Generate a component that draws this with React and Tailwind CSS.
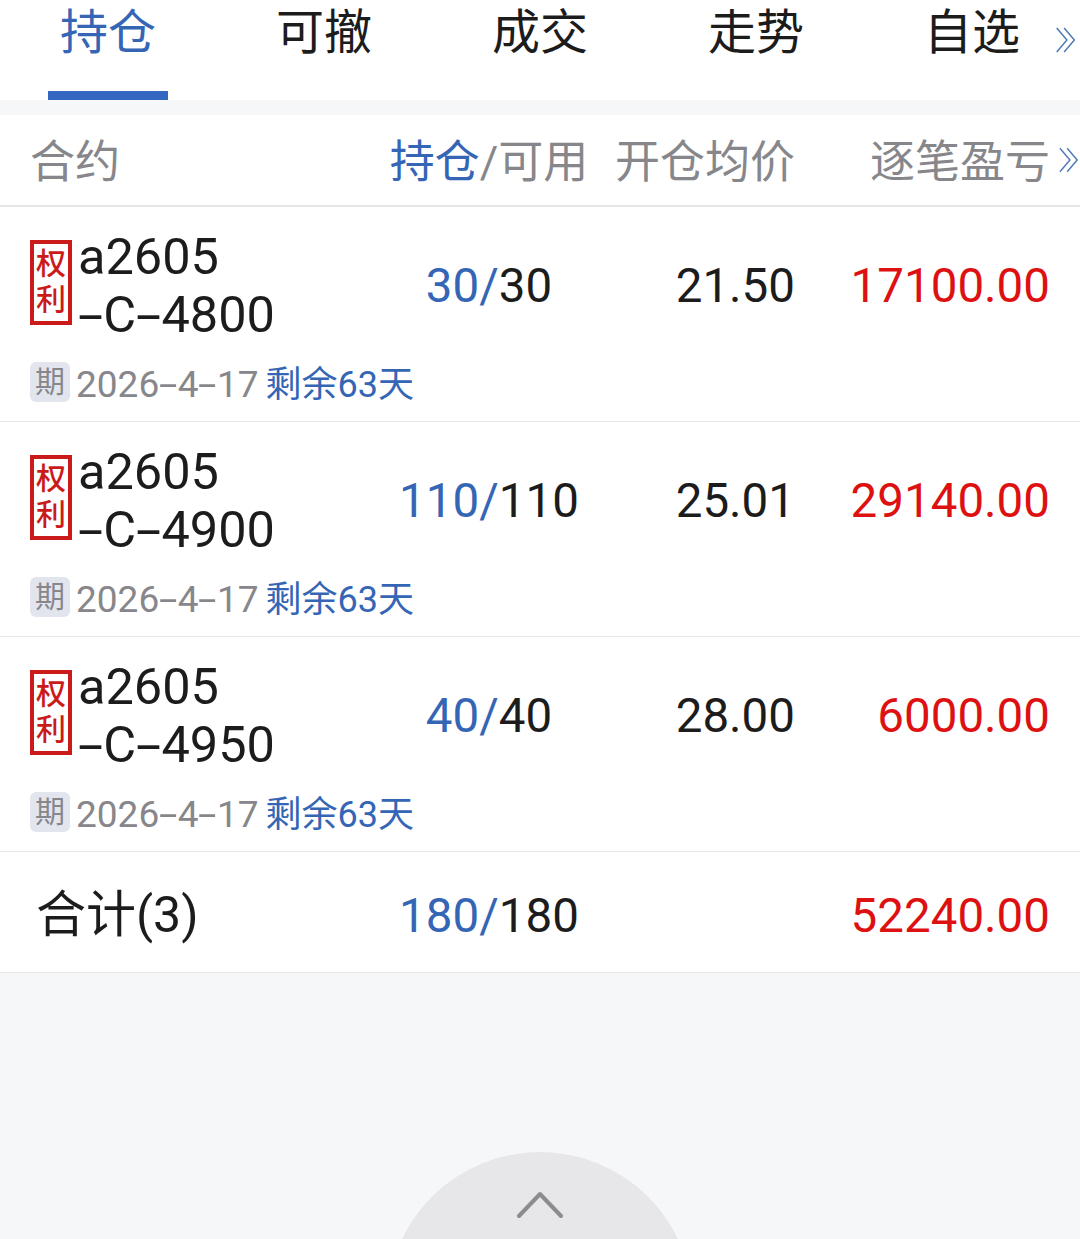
const tabs = [
  { label: '持仓', className: 'w-[120px] ml-[48px] text-[#3565b5]' },
  { label: '可撤', className: 'w-[96px] ml-[108px] text-[#1c1c1c]' },
  { label: '成交', className: 'w-[96px] ml-[120px] text-[#1c1c1c]' },
  { label: '走势', className: 'w-[96px] ml-[120px] text-[#1c1c1c]' },
  { label: '自选', className: 'w-[96px] ml-[120px] text-[#1c1c1c]' },
];

const rows = [
  { strike: '4800', hold: '30', avg: '21.50', profit: '17100.00' },
  { strike: '4900', hold: '110', avg: '25.01', profit: '29140.00' },
  { strike: '4950', hold: '40', avg: '28.00', profit: '6000.00' },
];

const columns = 'grid grid-cols-[370px_238px_187px_255px] items-center';

function DoubleArrow({ className }) {
  return (
    <svg viewBox="0 0 22 28" fill="none" stroke="#4f79b5" strokeWidth="1.6" className={className}>
      <path d="M1 1l11 13L1 27" />
      <path d="M9 1l11 13L9 27" />
    </svg>
  );
}

// the screenshot's font has a much wider hyphen than Roboto
function Dash() {
  return <span className="inline-block w-[0.5em] scale-x-[1.8] text-center">-</span>;
}

function App() {
  return (
    <div className="relative h-[1239px] w-[1080px] overflow-hidden bg-[#f6f7f9] font-['Roboto','Noto_Sans_CJK_SC',sans-serif]">
      <div className="relative flex h-[100px] bg-white">
        {tabs.map((tab, i) => (
          <div key={tab.label} className={`h-full text-center text-[48px] leading-[66px] ${tab.className} ${i === 0 ? 'border-b-[9px] border-[#3367c1]' : ''}`}>
            {tab.label}
          </div>
        ))}
        <DoubleArrow className="absolute left-[1055px] top-[27px] h-[26px] w-[22px]" />
      </div>

      <div className="mt-[15px] bg-white">
        <div className={`relative h-[92px] border-b-2 border-[#e3e5e6] pt-[6px] text-[45px] text-[#87878b] ${columns}`}>
          <div className="pl-[30px]">合约</div>
          <div className="whitespace-nowrap text-center">
            <span className="text-[#3565b5]">持仓</span>/可用
          </div>
          <div className="whitespace-nowrap text-right">开仓均价</div>
          <div className="whitespace-nowrap text-right">逐笔盈亏</div>
          <DoubleArrow className="absolute left-[1059px] top-[32px] h-[26px] w-[20px]" />
        </div>

        {rows.map((row) => (
          <div key={row.strike} className="h-[215px] border-b border-[#e6e7e9]">
            <div className={`h-[146px] pt-[12px] ${columns}`}>
              <div className="flex items-center pl-[30px]">
                <div className="-mt-[8px] flex h-[85px] w-[42px] flex-col items-center justify-center border-4 border-[#cb1a1a] text-[30px] font-medium leading-[36px] text-[#cb1a1a]">
                  <span>权</span>
                  <span>利</span>
                </div>
                <div className="ml-[6px] whitespace-nowrap text-[50.5px] leading-[58px] text-[#1c1c1c]">
                  <div>a2605</div>
                  <div>
                    <Dash />C<Dash />{row.strike}
                  </div>
                </div>
              </div>
              <div className="pt-[2px] text-center text-[47.5px] text-[#1c1c1c]">
                <span className="text-[#3565b5]">{row.hold}/</span>
                {row.hold}
              </div>
              <div className="pt-[2px] text-right text-[47.5px] text-[#1c1c1c]">{row.avg}</div>
              <div className="pt-[2px] text-right text-[47.5px] text-[#dd1111]">{row.profit}</div>
            </div>
            <div className="flex items-center pl-[30px] pt-[2px]">
              <div className="flex h-[40px] w-[40px] items-center justify-center rounded-[6px] bg-[#e2e5ee] text-[30px] text-[#87878b]">期</div>
              <span className="ml-[6px] pt-[7px] text-[37px] leading-[46px] text-[#87878b]">
                2026<Dash />4<Dash />17
              </span>
              <span className="ml-[7px] pt-[7px] text-[36px] leading-[46px] text-[#3565b5]">剩余63天</span>
            </div>
          </div>
        ))}

        <div className={`h-[121px] border-b border-[#e6e7e9] pt-[10px] ${columns}`}>
          <div className="-mt-[4px] pl-[36px] text-[50px] text-[#1c1c1c]">合计(3)</div>
          <div className="text-center text-[47.5px] text-[#1c1c1c]">
            <span className="text-[#3565b5]">180/</span>180
          </div>
          <div />
          <div className="text-right text-[47.5px] text-[#dd1111]">52240.00</div>
        </div>
      </div>

      <div className="absolute left-[387px] top-[1152px] flex h-[306px] w-[306px] justify-center rounded-full bg-[#e7e7e9] pt-[38px]">
        <svg viewBox="0 0 46 28" fill="none" stroke="#8c8c8e" strokeWidth="4" strokeLinecap="round" strokeLinejoin="round" className="h-[28px] w-[46px]">
          <path d="M2 26L23 4l21 22" />
        </svg>
      </div>
    </div>
  );
}

export default App;
